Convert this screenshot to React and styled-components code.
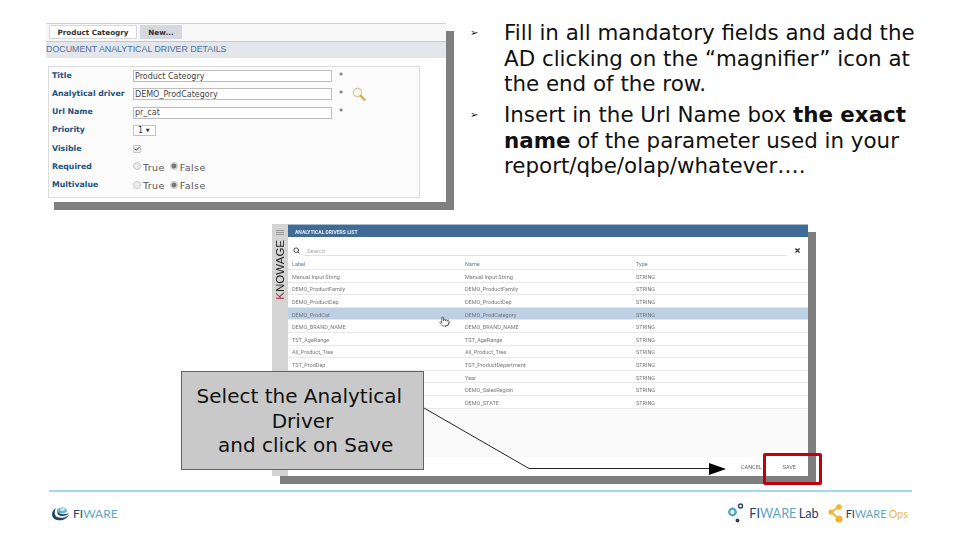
import styled, { createGlobalStyle } from "styled-components";
import { Check, Pointer, Search, X } from "lucide-react";

// labels of the last three rows lie under the callout
const drivers = [
    ["Manual Input String", "Manual Input String"],
    ["DEMO_ProductFamily", "DEMO_ProductFamily"],
    ["DEMO_ProductDep", "DEMO_ProductDep"],
    ["DEMO_ProdCat", "DEMO_ProdCategory"],
    ["DEMO_BRAND_NAME", "DEMO_BRAND_NAME"],
    ["TST_AgeRange", "TST_AgeRange"],
    ["All_Product_Tree", "All_Product_Tree"],
    ["TST_ProdDep", "TST_ProductDepartment"],
    ["", "Year"],
    ["", "DEMO_SalesRegion"],
    ["", "DEMO_STATE"],
];

export default function App() {
    return (
        <Slide>
            <GlobalStyle />
            <TopRow>
                <DetailsPanel>
                    <TabBar>
                        <Tab $active>Product Cateogry</Tab>
                        <Tab>New...</Tab>
                    </TabBar>
                    <PanelTitle>DOCUMENT ANALYTICAL DRIVER DETAILS</PanelTitle>
                    <FormBox>
                        <FormRow>
                            <FieldLabel>Title</FieldLabel>
                            <TextField readOnly value="Product Cateogry" />
                            <Star>*</Star>
                        </FormRow>
                        <FormRow>
                            <FieldLabel>Analytical driver</FieldLabel>
                            <TextField readOnly value="DEMO_ProdCategory" />
                            <Star>*</Star>
                            <Magnifier />
                        </FormRow>
                        <FormRow>
                            <FieldLabel>Url Name</FieldLabel>
                            <TextField readOnly value="pr_cat" />
                            <Star>*</Star>
                        </FormRow>
                        <FormRow>
                            <FieldLabel>Priority</FieldLabel>
                            <SelectBox>1 <small>▼</small></SelectBox>
                        </FormRow>
                        <FormRow>
                            <FieldLabel>Visible</FieldLabel>
                            <CheckBox><Check size={8} strokeWidth={4} /></CheckBox>
                        </FormRow>
                        <FormRow>
                            <FieldLabel>Required</FieldLabel>
                            <Radio />
                            <RadioText>True</RadioText>
                            <Radio $checked />
                            <RadioText>False</RadioText>
                        </FormRow>
                        <FormRow>
                            <FieldLabel>Multivalue</FieldLabel>
                            <Radio />
                            <RadioText>True</RadioText>
                            <Radio $checked />
                            <RadioText>False</RadioText>
                        </FormRow>
                    </FormBox>
                </DetailsPanel>
                <BulletList>
                    <Bullet>
                        <BulletMark>➢</BulletMark>
                        <span>Fill in all mandatory fields and add the AD clicking on the “magnifier” icon at the end of the row.</span>
                    </Bullet>
                    <Bullet>
                        <BulletMark>➢</BulletMark>
                        <span>Insert in the Url Name box <b>the exact name</b> of the parameter used in your report/qbe/olap/whatever….</span>
                    </Bullet>
                </BulletList>
            </TopRow>

            <DriversWindow>
                <SideBar>
                    <Burger><i /><i /><i /></Burger>
                    <Brand><em>K</em>NOWAGE</Brand>
                </SideBar>
                <DriversMain>
                    <DriversHeader>ANALYTICAL DRIVERS LIST</DriversHeader>
                    <SearchRow>
                        <Search size={7} strokeWidth={3} color="#333" />
                        <SearchText>Search</SearchText>
                        <CloseMark><X size={7} strokeWidth={4} color="#333" /></CloseMark>
                    </SearchRow>
                    <TableRow $head>
                        <span>Label</span>
                        <span>Name</span>
                        <span>Type</span>
                    </TableRow>
                    {drivers.map(([label, name]) => (
                        <TableRow key={name} $selected={label === "DEMO_ProdCat"}>
                            <span>{label}</span>
                            <span>{name}</span>
                            <span>STRING</span>
                        </TableRow>
                    ))}
                    <TableFiller />
                    <DialogFooter>
                        <span>CANCEL</span>
                        <span>SAVE</span>
                    </DialogFooter>
                </DriversMain>
            </DriversWindow>

            <Footer>
                <LogoGroup>
                    <FiwareMark />
                    <LogoText $size={12}>FI<span>WARE</span></LogoText>
                </LogoGroup>
                <FooterRight>
                    <LogoGroup>
                        <LabMark />
                        <LogoText $size={12.7}>FI<span>WARE</span> Lab</LogoText>
                    </LogoGroup>
                    <LogoGroup $tight>
                        <OpsMark />
                        <LogoText $size={11}>FI<span>WARE</span> <strong>Ops</strong></LogoText>
                    </LogoGroup>
                </FooterRight>
            </Footer>

            <HandCursor><Pointer size={11} strokeWidth={1.6} /></HandCursor>
            <ArrowLayer width="960" height="540" viewBox="0 0 960 540">
                <path d="M424 408 L529 468.5 L712 468.5" fill="none" stroke="#222" strokeWidth="1" />
                <path d="M709 463 L726 469 L709 475 Z" fill="#000" />
            </ArrowLayer>
            <Callout>{"Select the Analytical\u00A0\nDriver\n and click on Save"}</Callout>
            <SaveHighlight />
        </Slide>
    );
}

function Magnifier() {
    return (
        <MagnifierSvg width="14" height="14" viewBox="0 0 14 14">
            <circle cx="5.5" cy="5.5" r="4.2" fill="#fdf8ea" stroke="#d8c9a4" strokeWidth="1.2" />
            <path d="M8.6 8.8 L12.6 12.8" stroke="#cfa552" strokeWidth="2.2" strokeLinecap="round" />
        </MagnifierSvg>
    );
}

function FiwareMark() {
    return (
        <svg width="19" height="15" viewBox="0 0 19 15">
            <ellipse cx="11" cy="4.5" rx="5" ry="3" fill="#5fb3cc" />
            <ellipse cx="11.5" cy="3.6" rx="2.6" ry="1.4" fill="#d7edf3" />
            <path d="M5 2 C0 5 -1 12 6 14 C11 15 16 13 18 9 C14 12 9 12.5 6 11 C3.5 9.5 3 5.5 5 2 Z" fill="#24436b" />
            <path d="M6.5 5 C5.5 8 8 10 11.5 10 C14 10 16.5 9 18 7 C14 8.6 8.5 9 6.5 5 Z" fill="#24436b" />
        </svg>
    );
}

function LabMark() {
    return (
        <svg width="18" height="20" viewBox="0 0 18 20">
            <circle cx="4.5" cy="9" r="3.2" fill="none" stroke="#4fa9c4" strokeWidth="2.4" />
            <circle cx="12.5" cy="3" r="2" fill="none" stroke="#24436b" strokeWidth="1.4" />
            <circle cx="9.5" cy="17.5" r="1.9" fill="#24436b" />
        </svg>
    );
}

function OpsMark() {
    return (
        <svg width="17" height="19" viewBox="0 0 17 19">
            <path d="M3 8 L11 3 M3 8 L11 15" stroke="#f5b335" strokeWidth="2" />
            <circle cx="3" cy="8" r="2.6" fill="#f5b335" />
            <circle cx="11" cy="3" r="2.8" fill="#f5b335" />
            <circle cx="11" cy="15" r="3.6" fill="#f5b335" />
        </svg>
    );
}

const GlobalStyle = createGlobalStyle`
    html, body {
        margin: 0;
        background: #fff;
    }
`

const Slide = styled.div`
    position: relative;
    width: 960px;
    height: 540px;
    overflow: hidden;
    box-sizing: border-box;
    padding-top: 20px;
    background: #fff;
    font-family: "DejaVu Sans", Verdana, sans-serif;
    color: #111;
`

const TopRow = styled.div`
    display: flex;
    align-items: flex-start;
    height: 204px;
`

const DetailsPanel = styled.div`
    display: flex;
    flex-direction: column;
    box-sizing: border-box;
    width: 400px;
    height: 179px;
    margin: 3px 24px 0 46px;
    border-top: 1px solid #cfcfcf;
    background: #fff;
    box-shadow: 8px 8px 0 #7f7f7f;
`

const TabBar = styled.div`
    display: flex;
    align-items: flex-end;
    gap: 3px;
    box-sizing: border-box;
    height: 18px;
    padding: 0 0 2px 3px;
    background: #f8f8f8;
    border-bottom: 1px solid #c4c8cc;
`

const Tab = styled.div`
    display: flex;
    align-items: center;
    justify-content: center;
    box-sizing: border-box;
    width: ${p => (p.$active ? "88px" : "42px")};
    height: 14px;
    font-size: 7.2px;
    font-weight: bold;
    color: #333;
    background: ${p => (p.$active ? "#fff" : "#d5d8de")};
    border: 1px solid ${p => (p.$active ? "#d8d8d8" : "#d5d8de")};
`

const PanelTitle = styled.div`
    height: 16px;
    line-height: 15px;
    font-family: "Liberation Sans", Arial, sans-serif;
    font-size: 8.85px;
    color: #4b7199;
    background: #e3e7ec;
`

const FormBox = styled.div`
    box-sizing: border-box;
    width: 372px;
    height: 132px;
    margin: 8px 0 0 2px;
    padding-left: 3px;
    background: #fbfbfb;
    border: 1px solid #dcdcdc;
`

const FormRow = styled.div`
    display: flex;
    align-items: center;
    height: 18.25px;
`

const FieldLabel = styled.div`
    width: 81px;
    flex: none;
    margin-bottom: 2px;
    font-size: 7.8px;
    font-weight: bold;
    color: #23527f;
`

const TextField = styled.input`
    box-sizing: border-box;
    width: 199px;
    height: 12px;
    padding: 0 1px;
    font-family: "DejaVu Sans", Verdana, sans-serif;
    font-size: 8px;
    color: #444;
    background: #fff;
    border: 1px solid #bdbdbd;
    outline: none;
`

const Star = styled.span`
    margin-left: 7px;
    font-size: 8px;
    color: #444;
`

const MagnifierSvg = styled.svg`
    margin-left: 9px;
`

const SelectBox = styled.div`
    box-sizing: border-box;
    width: 23px;
    height: 11px;
    padding-left: 4px;
    line-height: 9px;
    font-size: 8px;
    color: #333;
    background: #fff;
    border: 1px solid #c4c4c4;

    small {
        font-size: 5px;
        vertical-align: 1px;
    }
`

const CheckBox = styled.div`
    display: flex;
    align-items: center;
    justify-content: center;
    box-sizing: border-box;
    width: 8px;
    height: 8px;
    color: #333;
    background: #f2f2f2;
    border: 1px solid #c4c4c4;
    border-radius: 1px;
`

const Radio = styled.span`
    display: block;
    flex: none;
    box-sizing: border-box;
    width: 8px;
    height: 8px;
    margin-bottom: 2px;
    border-radius: 50%;
    border: 1px solid #c8c8c8;
    background: ${p => (p.$checked ? "radial-gradient(circle, #777 0 2px, #e4e4e4 3px)" : "#ececec")};
`

const RadioText = styled.span`
    margin: 0 5px 0 2px;
    font-size: 9.5px;
    letter-spacing: 0.4px;
    color: #555;
`

const BulletList = styled.div`
    width: 454px;
    font-size: 21.4px;
    line-height: 25.5px;
`

const Bullet = styled.div`
    display: flex;
    margin-bottom: 5.5px;
`

const BulletMark = styled.span`
    flex: none;
    width: 34px;
    font-size: 10px;
`

const DriversWindow = styled.div`
    display: flex;
    width: 536px;
    height: 252px;
    margin-left: 272px;
    box-shadow: 8px 8px 0 #7f7f7f;
`

const SideBar = styled.div`
    display: flex;
    flex-direction: column;
    align-items: center;
    width: 16px;
    flex: none;
    background: #d4d4d4;
`

const Burger = styled.div`
    display: flex;
    flex-direction: column;
    gap: 1px;
    margin: 6px 0 5px;

    i {
        display: block;
        width: 8px;
        height: 1px;
        background: #999;
    }
`

const Brand = styled.div`
    writing-mode: vertical-rl;
    transform: rotate(180deg);
    font-family: "Liberation Sans", Arial, sans-serif;
    font-size: 11.5px;
    line-height: 14px;
    color: #222;

    em {
        font-style: normal;
        color: #a82a48;
    }
`

const DriversMain = styled.div`
    display: flex;
    flex-direction: column;
    flex: 1;
    min-width: 0;
    font-family: Roboto, "Liberation Sans", sans-serif;
    filter: blur(0.3px);
`

const DriversHeader = styled.div`
    height: 13px;
    padding-left: 7px;
    line-height: 14px;
    font-size: 5px;
    font-weight: bold;
    color: #e6edf3;
    background: #3f6b94;
    border-top: 1px solid #a8bccd;
    box-sizing: border-box;
`

const SearchRow = styled.div`
    position: relative;
    display: flex;
    align-items: center;
    gap: 7px;
    box-sizing: border-box;
    height: 20px;
    padding: 6px 21px 0 5px;
    background: #fff;

    &::after {
        content: "";
        position: absolute;
        left: 16px;
        right: 21px;
        bottom: 1px;
        height: 1px;
        background: #e2e2e2;
    }
`

const SearchText = styled.span`
    font-size: 6px;
    color: #aaa;
`

const CloseMark = styled.span`
    position: absolute;
    right: 7px;
    top: 10px;
    line-height: 0;
`

const TableRow = styled.div`
    display: grid;
    grid-template-columns: 173px 171px 1fr;
    align-items: center;
    box-sizing: border-box;
    height: ${p => (p.$head ? "13px" : "12.6px")};
    padding-top: 2px;
    font-size: 5.5px;
    color: ${p => (p.$head ? "#5f7f9f" : "#777")};
    background: ${p => (p.$selected ? "#bdd0e4" : "#fff")};
    border-bottom: 1px solid #e8e8e8;

    span {
        padding-left: 4px;
        white-space: nowrap;
    }
`

const TableFiller = styled.div`
    flex: 1;
    background: #fafafa;
`

const DialogFooter = styled.div`
    display: flex;
    justify-content: flex-end;
    align-items: center;
    gap: 21px;
    height: 19px;
    padding-right: 12px;
    font-size: 5.5px;
    color: #666;
    background: #fff;
`

const Footer = styled.div`
    display: flex;
    justify-content: space-between;
    align-items: center;
    box-sizing: border-box;
    width: 863px;
    height: 44px;
    margin: 14px 0 0 49px;
    padding: 0 4px 0 2px;
    border-top: 2px solid #a0dbe5;
`

const FooterRight = styled.div`
    display: flex;
    align-items: center;
    gap: 9px;
`

const LogoGroup = styled.div`
    display: flex;
    align-items: center;
    gap: ${p => (p.$tight ? "1px" : "3px")};
`

const LogoText = styled.div`
    font-family: Lato, "Open Sans", sans-serif;
    font-size: ${p => p.$size}px;
    font-weight: 400;
    word-spacing: -1px;
    color: #24436b;

    span {
        color: #5fa8c4;
    }

    strong {
        font-weight: 400;
        color: #f0b64a;
    }
`

const HandCursor = styled.div`
    position: absolute;
    left: 439px;
    top: 316px;
    line-height: 0;
    color: #444;
`

const ArrowLayer = styled.svg`
    position: absolute;
    left: 0;
    top: 0;
    pointer-events: none;
`

const Callout = styled.div`
    position: absolute;
    left: 181px;
    top: 371px;
    box-sizing: border-box;
    width: 243px;
    height: 99px;
    padding-top: 12px;
    font-size: 20px;
    line-height: 24.5px;
    text-align: center;
    white-space: pre-wrap;
    color: #111;
    background: #c9c9c9;
    border: 1.5px solid #5b52c4;
`

const SaveHighlight = styled.div`
    position: absolute;
    left: 763px;
    top: 453px;
    box-sizing: border-box;
    width: 59px;
    height: 32px;
    border: 3px solid #c00010;
    border-radius: 2px;
`
